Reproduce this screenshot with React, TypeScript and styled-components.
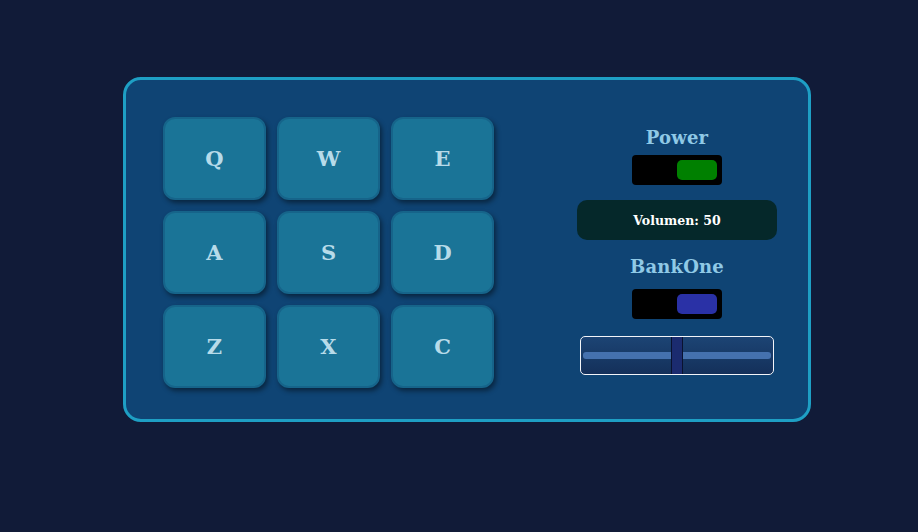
import React from "react";
import styled, { createGlobalStyle } from "styled-components";

const Global = createGlobalStyle`
  html, body { margin: 0; padding: 0; background: #111b38; }
  body { font-family: "DejaVu Serif", serif; }
`;

const Page = styled.div`
  width: 918px;
  height: 532px;
  box-sizing: border-box;
  padding: 77px 0 0 123px;
`;

const Machine = styled.div`
  width: 688px;
  height: 345px;
  box-sizing: border-box;
  border: 3px solid #1e9fc4;
  border-radius: 18px;
  background: #0f4474;
  display: flex;
  padding: 37px 31px 0 37px;
`;

const Pads = styled.div`
  display: grid;
  grid-template-columns: repeat(3, 103px);
  grid-auto-rows: 83px;
  gap: 11px;
`;

const Pad = styled.div`
  box-sizing: border-box;
  border: 2px solid #16648a;
  border-radius: 12px;
  background: #1a7497;
  box-shadow: 2px 3px 5px rgba(0, 0, 0, 0.45);
  display: flex;
  align-items: center;
  justify-content: center;
  color: #b7dbe9;
  font-weight: bold;
  font-size: 21px;
`;

const Controls = styled.div`
  margin-left: auto;
  width: 200px;
  display: flex;
  flex-direction: column;
  align-items: center;
  margin-top: 9px;
`;

const Label = styled.div<{ $gap: number }>`
  color: #8fc9e6;
  font-weight: bold;
  font-size: 18px;
  line-height: 24px;
  letter-spacing: 0.2px;
  margin-bottom: ${(p) => p.$gap}px;
`;

const Toggle = styled.div`
  width: 90px;
  height: 30px;
  box-sizing: border-box;
  background: #000;
  border-radius: 4px;
  display: flex;
  align-items: center;
  justify-content: flex-end;
  padding-right: 5px;
`;

const Knob = styled.div<{ $color: string }>`
  width: 40px;
  height: 20px;
  border-radius: 5px;
  background: ${(p) => p.$color};
`;

const Volume = styled.div`
  width: 200px;
  height: 40px;
  margin: 15px 0;
  border-radius: 10px;
  background: #05282a;
  color: #fff;
  font-weight: bold;
  font-size: 12.5px;
  display: flex;
  align-items: center;
  justify-content: center;
`;

const Slider = styled.div`
  margin-top: 17px;
  width: 194px;
  height: 39px;
  box-sizing: border-box;
  border: 1px solid #f2f4f8;
  border-radius: 5px;
  background: linear-gradient(#1c4474, #14305a);
  display: flex;
  align-items: center;
  padding: 0 2px;
  position: relative;
`;

const Track = styled.div`
  flex: 1;
  height: 7px;
  border-radius: 3px;
  background: #4571ae;
`;

const Thumb = styled.div`
  position: absolute;
  left: 90px;
  top: 0;
  bottom: 0;
  width: 12px;
  box-sizing: border-box;
  background: #1b2b6f;
  border-left: 1px solid #0a1230;
  border-right: 1px solid #0a1230;
`;

const keys = ["Q", "W", "E", "A", "S", "D", "Z", "X", "C"];

export default function App() {
  return (
    <>
      <Global />
      <Page>
        <Machine>
          <Pads>
            {keys.map((k) => (
              <Pad key={k}>{k}</Pad>
            ))}
          </Pads>
          <Controls>
            <Label $gap={5}>Power</Label>
            <Toggle>
              <Knob $color="#008000" />
            </Toggle>
            <Volume>Volumen: 50</Volume>
            <Label $gap={10}>BankOne</Label>
            <Toggle>
              <Knob $color="#2a31a6" />
            </Toggle>
            <Slider>
              <Track />
              <Thumb />
            </Slider>
          </Controls>
        </Machine>
      </Page>
    </>
  );
}
